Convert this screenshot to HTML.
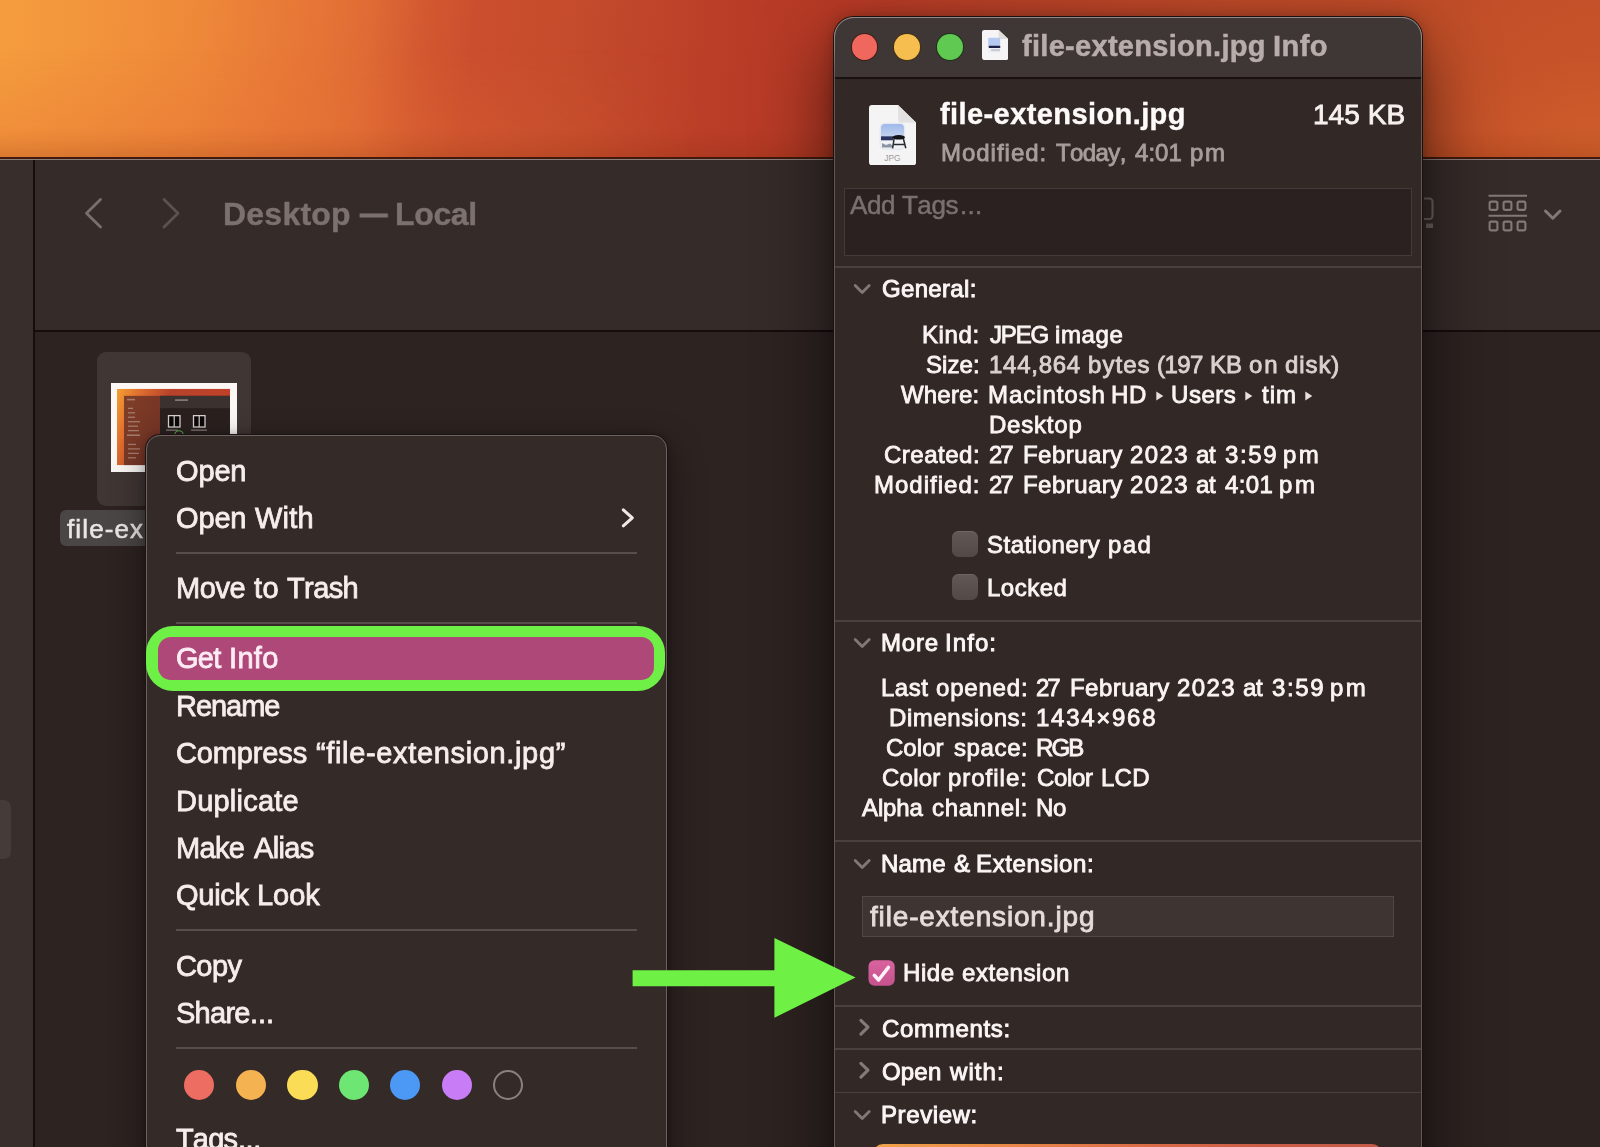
<!DOCTYPE html>
<html><head><meta charset="utf-8"><title>Get Info</title>
<style>
html,body{margin:0;padding:0;width:1600px;height:1147px;overflow:hidden;}
#root{position:absolute;left:0;top:0;width:1600px;height:1147px;overflow:hidden;background:#2d2321;}
body{width:1600px;height:1147px;overflow:hidden;position:relative;background:#2d2321;font-family:"Liberation Sans",sans-serif;font-kerning:none;}
.a{position:absolute;}
.t{position:absolute;white-space:pre;font-family:"Liberation Sans",sans-serif;font-kerning:none;font-variant-ligatures:none;will-change:transform;}
</style></head><body><div id="root">

<div class="a" style="left:0;top:0;width:1600px;height:160px;background:linear-gradient(96deg,#f59e3e 0%,#f2943c 6%,#ee8839 12.5%,#ea7e38 16%,#e57436 20%,#e06b35 23%,#d25830 26.5%,#cb4f2e 29.5%,#c44b2c 36%,#b93c27 46%,#b53925 52%,#b64027 62%,#bc4828 75%,#bf4c28 90%,#c14e28 100%);"></div>
<div class="a" style="left:1400px;top:0;width:200px;height:160px;background:radial-gradient(ellipse at 100% 100%,rgba(212,100,44,.75) 0%,rgba(206,92,42,.35) 50%,rgba(200,80,40,0) 100%);"></div>
<div class="a" style="left:0;top:0;width:700px;height:160px;background:linear-gradient(180deg,rgba(232,120,56,0) 0%,rgba(232,120,56,0) 30%,rgba(230,112,52,.38) 100%);-webkit-mask-image:linear-gradient(90deg,#000 0%,#000 45%,transparent 100%);mask-image:linear-gradient(90deg,#000 0%,#000 45%,transparent 100%);"></div>
<div class="a" style="left:0;top:128px;width:1600px;height:30px;background:linear-gradient(180deg,rgba(110,35,0,0) 0%,rgba(110,35,0,.06) 45%,rgba(110,35,0,.17) 100%);"></div>
<div class="a" style="left:0;top:157.2px;width:1600px;height:1.7px;background:#42190c;"></div>
<div class="a" style="left:0;top:158.8px;width:1600px;height:1.7px;background:#8a7d7a;"></div>
<div class="a" style="left:0;top:160.4px;width:1600px;height:171px;background:#352b29;"></div>
<div class="a" style="left:0;top:330px;width:1600px;height:1.5px;background:#140d0c;"></div>
<div class="a" style="left:0;top:331.5px;width:1600px;height:816px;background:#2d2321;"></div>
<div class="a" style="left:0;top:160px;width:33px;height:987px;background:#382e2c;"></div>
<div class="a" style="left:33px;top:160px;width:2px;height:987px;background:#150e0d;"></div>
<div class="a" style="left:-8px;top:800px;width:18.5px;height:59px;border-radius:7px;background:#453b39;"></div>
<svg class="a" style="left:80px;top:190px" width="110" height="46" viewBox="0 0 110 46">
<polyline points="20.5,9.5 6.5,23.3 20.5,37" fill="none" stroke="#7b6f6d" stroke-width="2.8" stroke-linecap="round" stroke-linejoin="round"/>
<polyline points="84,9.5 98,23.3 84,37" fill="none" stroke="#5d5250" stroke-width="2.8" stroke-linecap="round" stroke-linejoin="round"/>
</svg>
<div class="t" style="left:223.21px;top:198px;font-size:32.00px;line-height:32.00px;color:#7d716f;letter-spacing:0.234px;font-weight:bold;-webkit-text-stroke:0.40px #7d716f;">Desktop</div>
<div class="t" style="left:359.85px;top:197px;font-size:32.00px;line-height:32.00px;color:#7d716f;letter-spacing:0.000px;font-weight:bold;-webkit-text-stroke:0.90px #7d716f;transform:scaleX(0.86);transform-origin:0 0;">—</div>
<div class="t" style="left:395.06px;top:198px;font-size:32.00px;line-height:32.00px;color:#7d716f;letter-spacing:-0.343px;font-weight:bold;-webkit-text-stroke:0.40px #7d716f;">Local</div>
<svg class="a" style="left:1420px;top:190px" width="150" height="46" viewBox="0 0 150 46" fill="none" stroke="#847977" stroke-width="2.1">
<path d="M4,8.500 h5.500 a3,3 0 0 1 3,3 v14.500 a3,3 0 0 1 -3,3 h-5.500" stroke="#6e6361" stroke-width="2.1"/>
<rect x="6" y="33.500" width="7" height="4.500" fill="#6e6361" stroke="none"/>
<line x1="68.5" y1="5.8" x2="107" y2="5.8"/>
<line x1="68.5" y1="25.8" x2="107" y2="25.8"/>
<rect x="69.6" y="11.6" width="7.800" height="8.300" rx="1.600"/>
<rect x="83.6" y="11.6" width="7.800" height="8.300" rx="1.600"/>
<rect x="97.6" y="11.6" width="7.800" height="8.300" rx="1.600"/>
<rect x="69.6" y="31.6" width="7.800" height="8.800" rx="1.600"/>
<rect x="83.6" y="31.6" width="7.800" height="8.800" rx="1.600"/>
<rect x="97.6" y="31.6" width="7.800" height="8.800" rx="1.600"/>
<polyline points="125.5,21 132.8,28.200 140,21" stroke-width="3" stroke-linecap="round" stroke-linejoin="round"/>
</svg>
<div class="a" style="left:96.5px;top:352px;width:154.5px;height:154px;border-radius:9px;background:#403634;"></div>
<svg class="a" style="left:111px;top:383.4px" width="126" height="89" viewBox="0 0 126 90" preserveAspectRatio="none">
<defs><linearGradient id="wp" x1="0" y1="0" x2="1" y2="0.25"><stop offset="0" stop-color="#f3a033"/><stop offset="0.18" stop-color="#e2722f"/><stop offset="0.45" stop-color="#b8432a"/><stop offset="1" stop-color="#c2402a"/></linearGradient></defs>
<rect width="126" height="90" fill="#fbf8f6"/>
<rect x="6" y="6" width="113" height="77" fill="url(#wp)"/>
<rect x="13" y="13" width="36" height="70" fill="#6a3326" opacity=".85"/>
<rect x="49" y="13" width="70" height="70" fill="#2a211f"/>
<rect x="49" y="13" width="70" height="12.5" fill="#3b312f"/>
<g fill="#b08c80" opacity=".8"><rect x="16" y="16" width="8" height="1.6"/><rect x="17" y="25" width="5" height="1.3"/><rect x="17" y="29.5" width="7" height="1.3"/><rect x="17" y="34" width="7" height="1.3"/><rect x="17" y="38.5" width="12" height="1.3"/><rect x="17" y="43" width="10" height="1.3"/><rect x="17" y="47.5" width="11" height="1.3"/><rect x="16" y="52" width="13" height="1.6"/><rect x="17" y="61.5" width="8" height="1.3"/><rect x="17" y="66" width="12" height="1.3"/><rect x="17" y="70.5" width="11" height="1.3"/><rect x="17" y="75" width="8" height="1.3"/></g>
<rect x="64" y="16.500" width="13" height="1.600" fill="#8d807c"/>
<rect x="57.5" y="33" width="11.5" height="11.5" fill="#0b0807" stroke="#d8d2cf" stroke-width="1.3"/><line x1="63.2" y1="33" x2="63.2" y2="44.5" stroke="#d8d2cf" stroke-width="1.2"/>
<rect x="82.5" y="33" width="11.5" height="11.5" fill="#0b0807" stroke="#d8d2cf" stroke-width="1.3"/><line x1="88.2" y1="33" x2="88.2" y2="44.5" stroke="#d8d2cf" stroke-width="1.2"/>
<rect x="55" y="47" width="12" height="1.4" fill="#7d716e"/><rect x="80" y="47" width="16" height="1.4" fill="#7d716e"/><circle cx="68" cy="52.500" r="4.200" fill="none" stroke="#5fae4a" stroke-width="1.100"/>
</svg>
<div class="a" style="left:60px;top:510.2px;width:110px;height:36px;border-radius:6px;background:#4a4645;"></div>
<div class="t" style="left:67.31px;top:516px;font-size:26.00px;line-height:26.00px;color:#ebe5e3;letter-spacing:1.124px;-webkit-text-stroke:0.55px #ebe5e3;">file-ex</div>
<div class="a" style="left:146px;top:434.5px;width:521px;height:760px;border-radius:14px;background:#342a28;box-shadow:0 0 0 1px #1c1413,0 12px 36px rgba(0,0,0,.45),0 0 10px rgba(0,0,0,.28);"></div>
<div class="a" style="left:146px;top:434.5px;width:519px;height:760px;border-radius:14px;border:1.3px solid #6c6260;"></div>
<div class="t" style="left:175.70px;top:457px;font-size:29.00px;line-height:29.00px;color:#f6eeec;letter-spacing:-0.153px;-webkit-text-stroke:0.80px #f6eeec;">Open</div>
<div class="t" style="left:175.70px;top:504px;font-size:29.00px;line-height:29.00px;color:#f6eeec;letter-spacing:-0.153px;-webkit-text-stroke:0.80px #f6eeec;">Open</div>
<div class="t" style="left:255.27px;top:504px;font-size:29.00px;line-height:29.00px;color:#f6eeec;letter-spacing:0.237px;-webkit-text-stroke:0.80px #f6eeec;">With</div>
<svg class="a" style="left:616px;top:503px" width="24" height="30" viewBox="0 0 24 30"><polyline points="7.3,6.8 16.3,14.8 7.3,22.8" fill="none" stroke="#f1e9e7" stroke-width="3.1" stroke-linecap="round" stroke-linejoin="round"/></svg>
<div class="a" style="left:176px;top:551.5px;width:461px;height:2px;background:#584e4c;"></div>
<div class="a" style="left:176px;top:622.0px;width:461px;height:2px;background:#584e4c;"></div>
<div class="a" style="left:176px;top:928.5px;width:461px;height:2px;background:#584e4c;"></div>
<div class="a" style="left:176px;top:1046.5px;width:461px;height:2px;background:#584e4c;"></div>
<div class="t" style="left:175.70px;top:574px;font-size:29.00px;line-height:29.00px;color:#f6eeec;letter-spacing:-0.408px;-webkit-text-stroke:0.80px #f6eeec;">Move</div>
<div class="t" style="left:253.71px;top:574px;font-size:29.00px;line-height:29.00px;color:#f6eeec;letter-spacing:0.421px;-webkit-text-stroke:0.80px #f6eeec;">to</div>
<div class="t" style="left:287.25px;top:574px;font-size:29.00px;line-height:29.00px;color:#f6eeec;letter-spacing:-0.598px;-webkit-text-stroke:0.80px #f6eeec;">Trash</div>
<div class="a" style="left:145.5px;top:626.2px;width:519.2px;height:65px;border-radius:27px;background:#6ef046;"></div>
<div class="a" style="left:158px;top:637px;width:495.7px;height:43.4px;border-radius:13px;background:#ae4879;"></div>
<div class="t" style="left:175.70px;top:644px;font-size:29.00px;line-height:29.00px;color:#fcecf3;letter-spacing:-0.690px;-webkit-text-stroke:0.80px #fcecf3;">Get</div>
<div class="t" style="left:228.97px;top:644px;font-size:29.00px;line-height:29.00px;color:#fcecf3;letter-spacing:0.324px;-webkit-text-stroke:0.80px #fcecf3;">Info</div>
<div class="t" style="left:175.70px;top:692px;font-size:29.00px;line-height:29.00px;color:#f6eeec;letter-spacing:-1.035px;-webkit-text-stroke:0.80px #f6eeec;">Rename</div>
<div class="t" style="left:175.70px;top:739px;font-size:29.00px;line-height:29.00px;color:#f6eeec;letter-spacing:-0.135px;-webkit-text-stroke:0.80px #f6eeec;">Compress</div>
<div class="t" style="left:316.34px;top:739px;font-size:29.00px;line-height:29.00px;color:#f6eeec;letter-spacing:0.652px;-webkit-text-stroke:0.80px #f6eeec;">“file-extension.jpg”</div>
<div class="t" style="left:175.70px;top:787px;font-size:29.00px;line-height:29.00px;color:#f6eeec;letter-spacing:0.224px;-webkit-text-stroke:0.80px #f6eeec;">Duplicate</div>
<div class="t" style="left:175.70px;top:834px;font-size:29.00px;line-height:29.00px;color:#f6eeec;letter-spacing:-0.658px;-webkit-text-stroke:0.80px #f6eeec;">Make</div>
<div class="t" style="left:254.09px;top:834px;font-size:29.00px;line-height:29.00px;color:#f6eeec;letter-spacing:-0.638px;-webkit-text-stroke:0.80px #f6eeec;">Alias</div>
<div class="t" style="left:175.70px;top:881px;font-size:29.00px;line-height:29.00px;color:#f6eeec;letter-spacing:-0.255px;-webkit-text-stroke:0.80px #f6eeec;">Quick</div>
<div class="t" style="left:256.77px;top:881px;font-size:29.00px;line-height:29.00px;color:#f6eeec;letter-spacing:-0.033px;-webkit-text-stroke:0.80px #f6eeec;">Look</div>
<div class="t" style="left:175.70px;top:952px;font-size:29.00px;line-height:29.00px;color:#f6eeec;letter-spacing:-0.581px;-webkit-text-stroke:0.80px #f6eeec;">Copy</div>
<div class="t" style="left:175.70px;top:999px;font-size:29.00px;line-height:29.00px;color:#f6eeec;letter-spacing:-0.737px;-webkit-text-stroke:0.80px #f6eeec;">Share</div>
<div class="t" style="left:249.50px;top:999px;font-size:29.00px;line-height:29.00px;color:#f6eeec;letter-spacing:-0.088px;-webkit-text-stroke:0.80px #f6eeec;">...</div>
<div class="t" style="left:175.70px;top:1125px;font-size:29.00px;line-height:29.00px;color:#f6eeec;letter-spacing:-0.841px;-webkit-text-stroke:0.80px #f6eeec;">Tags</div>
<div class="t" style="left:237.75px;top:1125px;font-size:29.00px;line-height:29.00px;color:#f6eeec;letter-spacing:-0.463px;-webkit-text-stroke:0.80px #f6eeec;">...</div>
<div class="a" style="left:184.05px;top:1069.8px;width:30.4px;height:30.4px;border-radius:50%;background:radial-gradient(circle at 50% 40%,#ee6d62 0%,#ee6d62 70%,#e8584e 100%);"></div>
<div class="a" style="left:235.80px;top:1069.8px;width:30.4px;height:30.4px;border-radius:50%;background:radial-gradient(circle at 50% 40%,#f4b250 0%,#f4b250 70%,#eea23c 100%);"></div>
<div class="a" style="left:287.30px;top:1069.8px;width:30.4px;height:30.4px;border-radius:50%;background:radial-gradient(circle at 50% 40%,#fadc57 0%,#fadc57 70%,#f2cd3c 100%);"></div>
<div class="a" style="left:338.55px;top:1069.8px;width:30.4px;height:30.4px;border-radius:50%;background:radial-gradient(circle at 50% 40%,#6ee673 0%,#6ee673 70%,#55d35c 100%);"></div>
<div class="a" style="left:390.05px;top:1069.8px;width:30.4px;height:30.4px;border-radius:50%;background:radial-gradient(circle at 50% 40%,#4c98f5 0%,#4c98f5 70%,#3a84e6 100%);"></div>
<div class="a" style="left:441.80px;top:1069.8px;width:30.4px;height:30.4px;border-radius:50%;background:radial-gradient(circle at 50% 40%,#c87df6 0%,#c87df6 70%,#b564e6 100%);"></div>
<div class="a" style="left:493.05px;top:1069.8px;width:30.4px;height:30.4px;border-radius:50%;border:2px solid #8b817f;box-sizing:border-box;"></div>
<div class="a" style="left:834px;top:17px;width:588px;height:1200px;border-radius:20px;background:#322927;box-shadow:0 0 0 1px #1a1211,0 32px 70px 4px rgba(0,0,0,.55),0 0 14px rgba(0,0,0,.25);"></div>
<div class="a" style="left:834px;top:17px;width:588px;height:60.5px;border-radius:20px 20px 0 0;background:#3f3735;"></div>
<div class="a" style="left:834px;top:77px;width:588px;height:1.6px;background:#181110;"></div>
<div class="a" style="left:834px;top:17px;width:588px;height:1200px;border-radius:20px;border:1.4px solid #625856;box-sizing:border-box;"></div>
<div class="a" style="left:834px;top:17px;width:588px;height:60px;overflow:hidden;-webkit-mask-image:linear-gradient(180deg,#000 0%,#000 35%,transparent 100%);mask-image:linear-gradient(180deg,#000 0%,#000 35%,transparent 100%);"><div style="width:588px;height:200px;border-radius:20px;border:1.5px solid #918683;box-sizing:border-box;"></div></div>
<div class="a" style="left:851.60px;top:34.30px;width:25.6px;height:25.6px;border-radius:50%;background:#f0675d;box-shadow:0 0 0 1.1px rgba(70,15,10,.6);"></div>
<div class="a" style="left:894.30px;top:34.30px;width:25.6px;height:25.6px;border-radius:50%;background:#f6be4f;box-shadow:0 0 0 1.1px rgba(70,45,5,.6);"></div>
<div class="a" style="left:937.20px;top:34.30px;width:25.6px;height:25.6px;border-radius:50%;background:#5fc951;box-shadow:0 0 0 1.1px rgba(10,50,10,.6);"></div>
<svg class="a" style="left:981.8px;top:29.8px" width="26.3" height="30.1" viewBox="0 0 26.3 30.1">
<path d="M2.5,0 H16.700 L26.3,9 V27.600 a2.5,2.5 0 0 1 -2.5,2.5 H2.5 a2.5,2.5 0 0 1 -2.5,-2.5 V2.5 a2.5,2.5 0 0 1 2.5,-2.5 z" fill="#f6f4f4"/>
<path d="M16.700,0 L26.3,9 H18.700 a2,2 0 0 1 -2,-2 z" fill="#e0dddd"/>
<rect x="6.2" y="7.800" width="12" height="8.200" rx="1" fill="#b7caf1"/>
<rect x="6.2" y="16" width="12.400" height="6.500" fill="#eef0f5"/>
<rect x="6.600" y="15.800" width="11.800" height="2.100" rx="0.900" fill="#1c2244"/>
<rect x="9" y="19" width="9" height="2.200" fill="#c9ccd6"/>
</svg>
<div class="t" style="left:1021.95px;top:32px;font-size:29.00px;line-height:29.00px;color:#b8adab;letter-spacing:0.298px;font-weight:bold;-webkit-text-stroke:0.50px #b8adab;">file-extension.jpg</div>
<div class="t" style="left:1272.61px;top:32px;font-size:29.00px;line-height:29.00px;color:#b8adab;letter-spacing:0.443px;font-weight:bold;-webkit-text-stroke:0.50px #b8adab;">Info</div>
<svg class="a" style="left:868.7px;top:104.8px" width="47.1" height="60.3" viewBox="0 0 47.1 60.3">
<defs><linearGradient id="sky" x1="0" y1="0" x2="0" y2="1"><stop offset="0" stop-color="#9db8ea"/><stop offset="1" stop-color="#c6d4ef"/></linearGradient></defs>
<path d="M3,0 H29 L47.1,17.700 V57.300 a3,3 0 0 1 -3,3 H3 a3,3 0 0 1 -3,-3 V3 a3,3 0 0 1 3,-3 z" fill="#f5f4f4"/>
<path d="M29,0 L47.1,17.700 H32.500 a3.500,3.500 0 0 1 -3.500,-3.500 z" fill="#e3e1e1"/>
<rect x="10.600" y="17.600" width="25.600" height="27.400" rx="5.200" fill="#e6e9f0"/>
<path d="M12,23 a4,4 0 0 1 4,-4 h15 a4,4 0 0 1 4,4 v8.800 h-23 z" fill="url(#sky)"/>
<path d="M12,31.600 h23 v8 a4,4 0 0 1 -4,4 h-15 a4,4 0 0 1 -4,-4 z" fill="#f1f3f7"/>
<rect x="12" y="31.300" width="12" height="4" fill="#2b3562"/>
<path d="M13,38 l4,2 l4,-1.500 l3,2.500 v1.500 h-11 z" fill="#8d94a6"/>
<path d="M25.200,33 L23.600,43.300 M34.200,33 L36.800,43.300 M24.200,39.500 H36" stroke="#2a2a31" stroke-width="1.500" fill="none"/>
<ellipse cx="29.700" cy="32.300" rx="6.300" ry="2.300" fill="#131318"/>
<text x="23.400" y="56" font-family="Liberation Sans, sans-serif" font-size="8.400" fill="#9c9a9a" text-anchor="middle">JPG</text>
</svg>
<div class="t" style="left:940.30px;top:100px;font-size:29.00px;line-height:29.00px;color:#fdfaf9;letter-spacing:0.410px;font-weight:bold;-webkit-text-stroke:0.40px #fdfaf9;">file-extension.jpg</div>
<div class="t" style="left:1312.69px;top:101px;font-size:28.00px;line-height:28.00px;color:#f6f1ef;letter-spacing:0.052px;-webkit-text-stroke:0.85px #f6f1ef;">145 KB</div>
<div class="t" style="left:940.96px;top:141px;font-size:24.00px;line-height:24.00px;color:#a89d9b;letter-spacing:0.978px;-webkit-text-stroke:0.85px #a89d9b;">Modified:</div>
<div class="t" style="left:1056.39px;top:141px;font-size:24.00px;line-height:24.00px;color:#a89d9b;letter-spacing:-0.605px;-webkit-text-stroke:0.85px #a89d9b;">Today,</div>
<div class="t" style="left:1134.67px;top:141px;font-size:24.00px;line-height:24.00px;color:#a89d9b;letter-spacing:0.054px;-webkit-text-stroke:0.85px #a89d9b;">4:01</div>
<div class="t" style="left:1190.18px;top:141px;font-size:24.00px;line-height:24.00px;color:#a89d9b;letter-spacing:1.639px;-webkit-text-stroke:0.85px #a89d9b;">pm</div>
<div class="a" style="left:844px;top:187.7px;width:567.5px;height:68px;background:#2b2120;border:1.3px solid #443a38;box-sizing:border-box;"></div>
<div class="t" style="left:850.20px;top:192px;font-size:26.00px;line-height:26.00px;color:#7a706e;letter-spacing:-0.400px;-webkit-text-stroke:0.50px #7a706e;">Add Tags</div>
<div class="t" style="left:959.88px;top:192px;font-size:26.00px;line-height:26.00px;color:#7a706e;letter-spacing:0.289px;-webkit-text-stroke:0.50px #7a706e;">...</div>
<div class="a" style="left:835.4px;top:266.10px;width:585.2px;height:1.6px;background:#4a403e;"></div>
<svg class="a" style="left:850px;top:281.40px" width="24" height="16" viewBox="0 0 24 16"><polyline points="5.2,4.600 12.200,11.600 19.200,4.600" fill="none" stroke="#837876" stroke-width="2.800" stroke-linecap="round" stroke-linejoin="round"/></svg>
<div class="t" style="left:881.77px;top:277px;font-size:24.00px;line-height:24.00px;color:#fbf6f5;letter-spacing:0.328px;-webkit-text-stroke:0.95px #fbf6f5;">General:</div>
<div class="t" style="left:922.46px;top:323px;font-size:24.00px;line-height:24.00px;color:#faf4f3;letter-spacing:0.602px;-webkit-text-stroke:0.85px #faf4f3;">Kind:</div>
<div class="t" style="left:989.75px;top:323px;font-size:24.00px;line-height:24.00px;color:#faf4f3;letter-spacing:-1.189px;-webkit-text-stroke:0.85px #faf4f3;">JPEG</div>
<div class="t" style="left:1054.82px;top:323px;font-size:24.00px;line-height:24.00px;color:#faf4f3;letter-spacing:0.614px;-webkit-text-stroke:0.85px #faf4f3;">image</div>
<div class="t" style="left:925.84px;top:353px;font-size:24.00px;line-height:24.00px;color:#faf4f3;letter-spacing:0.094px;-webkit-text-stroke:0.85px #faf4f3;">Size:</div>
<div class="t" style="left:988.60px;top:353px;font-size:24.00px;line-height:24.00px;color:#dbd1cf;letter-spacing:0.738px;-webkit-text-stroke:0.85px #dbd1cf;">144,864</div>
<div class="t" style="left:1087.63px;top:353px;font-size:24.00px;line-height:24.00px;color:#dbd1cf;letter-spacing:1.050px;-webkit-text-stroke:0.85px #dbd1cf;">bytes</div>
<div class="t" style="left:1156.94px;top:353px;font-size:24.00px;line-height:24.00px;color:#dbd1cf;letter-spacing:-0.563px;-webkit-text-stroke:0.85px #dbd1cf;">(197</div>
<div class="t" style="left:1210.46px;top:353px;font-size:24.00px;line-height:24.00px;color:#dbd1cf;letter-spacing:-0.131px;-webkit-text-stroke:0.85px #dbd1cf;">KB</div>
<div class="t" style="left:1249.42px;top:353px;font-size:24.00px;line-height:24.00px;color:#dbd1cf;letter-spacing:2.021px;-webkit-text-stroke:0.85px #dbd1cf;">on</div>
<div class="t" style="left:1284.72px;top:353px;font-size:24.00px;line-height:24.00px;color:#dbd1cf;letter-spacing:0.919px;-webkit-text-stroke:0.85px #dbd1cf;">disk)</div>
<div class="t" style="left:901.32px;top:383px;font-size:24.00px;line-height:24.00px;color:#faf4f3;letter-spacing:0.178px;-webkit-text-stroke:0.85px #faf4f3;">Where:</div>
<div class="t" style="left:987.96px;top:383px;font-size:24.00px;line-height:24.00px;color:#faf4f3;letter-spacing:0.943px;-webkit-text-stroke:0.85px #faf4f3;">Macintosh</div>
<div class="t" style="left:1110.96px;top:383px;font-size:24.00px;line-height:24.00px;color:#faf4f3;letter-spacing:0.603px;-webkit-text-stroke:0.85px #faf4f3;">HD</div>
<div class="t" style="left:1170.57px;top:383px;font-size:24.00px;line-height:24.00px;color:#faf4f3;letter-spacing:0.549px;-webkit-text-stroke:0.85px #faf4f3;">Users</div>
<div class="t" style="left:1262.06px;top:383px;font-size:24.00px;line-height:24.00px;color:#faf4f3;letter-spacing:1.052px;-webkit-text-stroke:0.85px #faf4f3;">tim</div>
<div class="t" style="left:989.06px;top:413px;font-size:24.00px;line-height:24.00px;color:#faf4f3;letter-spacing:0.789px;-webkit-text-stroke:0.85px #faf4f3;">Desktop</div>
<div class="t" style="left:883.96px;top:443px;font-size:24.00px;line-height:24.00px;color:#faf4f3;letter-spacing:0.508px;-webkit-text-stroke:0.85px #faf4f3;">Created:</div>
<div class="t" style="left:989.22px;top:443px;font-size:24.00px;line-height:24.00px;color:#faf4f3;letter-spacing:-2.131px;-webkit-text-stroke:0.85px #faf4f3;">27</div>
<div class="t" style="left:1022.86px;top:443px;font-size:24.00px;line-height:24.00px;color:#faf4f3;letter-spacing:0.461px;-webkit-text-stroke:0.85px #faf4f3;">February</div>
<div class="t" style="left:1130.47px;top:443px;font-size:24.00px;line-height:24.00px;color:#faf4f3;letter-spacing:1.424px;-webkit-text-stroke:0.85px #faf4f3;">2023</div>
<div class="t" style="left:1195.66px;top:443px;font-size:24.00px;line-height:24.00px;color:#faf4f3;letter-spacing:-0.420px;-webkit-text-stroke:0.85px #faf4f3;">at</div>
<div class="t" style="left:1224.51px;top:443px;font-size:24.00px;line-height:24.00px;color:#faf4f3;letter-spacing:1.663px;-webkit-text-stroke:0.85px #faf4f3;">3:59</div>
<div class="t" style="left:1283.38px;top:443px;font-size:24.00px;line-height:24.00px;color:#faf4f3;letter-spacing:2.439px;-webkit-text-stroke:0.85px #faf4f3;">pm</div>
<div class="t" style="left:874.06px;top:473px;font-size:24.00px;line-height:24.00px;color:#faf4f3;letter-spacing:1.016px;-webkit-text-stroke:0.85px #faf4f3;">Modified:</div>
<div class="t" style="left:989.22px;top:473px;font-size:24.00px;line-height:24.00px;color:#faf4f3;letter-spacing:-2.131px;-webkit-text-stroke:0.85px #faf4f3;">27</div>
<div class="t" style="left:1022.86px;top:473px;font-size:24.00px;line-height:24.00px;color:#faf4f3;letter-spacing:0.461px;-webkit-text-stroke:0.85px #faf4f3;">February</div>
<div class="t" style="left:1130.47px;top:473px;font-size:24.00px;line-height:24.00px;color:#faf4f3;letter-spacing:1.424px;-webkit-text-stroke:0.85px #faf4f3;">2023</div>
<div class="t" style="left:1195.66px;top:473px;font-size:24.00px;line-height:24.00px;color:#faf4f3;letter-spacing:-0.420px;-webkit-text-stroke:0.85px #faf4f3;">at</div>
<div class="t" style="left:1224.87px;top:473px;font-size:24.00px;line-height:24.00px;color:#faf4f3;letter-spacing:0.387px;-webkit-text-stroke:0.85px #faf4f3;">4:01</div>
<div class="t" style="left:1279.38px;top:473px;font-size:24.00px;line-height:24.00px;color:#faf4f3;letter-spacing:2.689px;-webkit-text-stroke:0.85px #faf4f3;">pm</div>
<svg class="a" style="left:1155.50px;top:391px" width="8" height="10" viewBox="0 0 8 10"><path d="M0.3,0.6 L7.3,5 L0.3,9.400 z" fill="#e9e0de"/></svg>
<svg class="a" style="left:1245.20px;top:391px" width="8" height="10" viewBox="0 0 8 10"><path d="M0.3,0.6 L7.3,5 L0.3,9.400 z" fill="#e9e0de"/></svg>
<svg class="a" style="left:1305.20px;top:391px" width="8" height="10" viewBox="0 0 8 10"><path d="M0.3,0.6 L7.3,5 L0.3,9.400 z" fill="#e9e0de"/></svg>
<div class="a" style="left:952px;top:531.25px;width:26px;height:26px;border-radius:6.5px;background:linear-gradient(#625856,#524947);box-shadow:inset 0 0.8px 0 rgba(255,255,255,.12);"></div>
<div class="a" style="left:952px;top:574.25px;width:26px;height:26px;border-radius:6.5px;background:linear-gradient(#625856,#524947);box-shadow:inset 0 0.8px 0 rgba(255,255,255,.12);"></div>
<div class="t" style="left:986.84px;top:533px;font-size:24.00px;line-height:24.00px;color:#faf4f3;letter-spacing:0.525px;-webkit-text-stroke:0.85px #faf4f3;">Stationery</div>
<div class="t" style="left:1108.38px;top:533px;font-size:24.00px;line-height:24.00px;color:#faf4f3;letter-spacing:1.350px;-webkit-text-stroke:0.85px #faf4f3;">pad</div>
<div class="t" style="left:986.96px;top:576px;font-size:24.00px;line-height:24.00px;color:#faf4f3;letter-spacing:0.505px;-webkit-text-stroke:0.85px #faf4f3;">Locked</div>
<div class="a" style="left:835.4px;top:619.95px;width:585.2px;height:1.6px;background:#4a403e;"></div>
<svg class="a" style="left:850px;top:635.00px" width="24" height="16" viewBox="0 0 24 16"><polyline points="5.2,4.600 12.200,11.600 19.200,4.600" fill="none" stroke="#837876" stroke-width="2.800" stroke-linecap="round" stroke-linejoin="round"/></svg>
<div class="t" style="left:881.01px;top:631px;font-size:24.00px;line-height:24.00px;color:#fbf6f5;letter-spacing:0.802px;-webkit-text-stroke:0.95px #fbf6f5;">More</div>
<div class="t" style="left:944.51px;top:631px;font-size:24.00px;line-height:24.00px;color:#fbf6f5;letter-spacing:1.064px;-webkit-text-stroke:0.95px #fbf6f5;">Info:</div>
<div class="t" style="left:880.96px;top:676px;font-size:24.00px;line-height:24.00px;color:#faf4f3;letter-spacing:0.477px;-webkit-text-stroke:0.85px #faf4f3;">Last</div>
<div class="t" style="left:935.67px;top:676px;font-size:24.00px;line-height:24.00px;color:#faf4f3;letter-spacing:0.808px;-webkit-text-stroke:0.85px #faf4f3;">opened:</div>
<div class="t" style="left:1036.22px;top:676px;font-size:24.00px;line-height:24.00px;color:#faf4f3;letter-spacing:-2.131px;-webkit-text-stroke:0.85px #faf4f3;">27</div>
<div class="t" style="left:1069.86px;top:676px;font-size:24.00px;line-height:24.00px;color:#faf4f3;letter-spacing:0.461px;-webkit-text-stroke:0.85px #faf4f3;">February</div>
<div class="t" style="left:1177.47px;top:676px;font-size:24.00px;line-height:24.00px;color:#faf4f3;letter-spacing:1.424px;-webkit-text-stroke:0.85px #faf4f3;">2023</div>
<div class="t" style="left:1242.66px;top:676px;font-size:24.00px;line-height:24.00px;color:#faf4f3;letter-spacing:-0.420px;-webkit-text-stroke:0.85px #faf4f3;">at</div>
<div class="t" style="left:1271.51px;top:676px;font-size:24.00px;line-height:24.00px;color:#faf4f3;letter-spacing:1.663px;-webkit-text-stroke:0.85px #faf4f3;">3:59</div>
<div class="t" style="left:1330.38px;top:676px;font-size:24.00px;line-height:24.00px;color:#faf4f3;letter-spacing:2.439px;-webkit-text-stroke:0.85px #faf4f3;">pm</div>
<div class="t" style="left:889.46px;top:706px;font-size:24.00px;line-height:24.00px;color:#faf4f3;letter-spacing:0.576px;-webkit-text-stroke:0.85px #faf4f3;">Dimensions:</div>
<div class="t" style="left:1036.10px;top:706px;font-size:24.00px;line-height:24.00px;color:#faf4f3;letter-spacing:1.725px;-webkit-text-stroke:0.85px #faf4f3;">1434×968</div>
<div class="t" style="left:886.21px;top:736px;font-size:24.00px;line-height:24.00px;color:#faf4f3;letter-spacing:0.041px;-webkit-text-stroke:0.85px #faf4f3;">Color</div>
<div class="t" style="left:953.51px;top:736px;font-size:24.00px;line-height:24.00px;color:#faf4f3;letter-spacing:0.610px;-webkit-text-stroke:0.85px #faf4f3;">space:</div>
<div class="t" style="left:1036.46px;top:736px;font-size:24.00px;line-height:24.00px;color:#faf4f3;letter-spacing:-1.937px;-webkit-text-stroke:0.85px #faf4f3;">RGB</div>
<div class="t" style="left:881.71px;top:766px;font-size:24.00px;line-height:24.00px;color:#faf4f3;letter-spacing:0.229px;-webkit-text-stroke:0.85px #faf4f3;">Color</div>
<div class="t" style="left:948.38px;top:766px;font-size:24.00px;line-height:24.00px;color:#faf4f3;letter-spacing:0.979px;-webkit-text-stroke:0.85px #faf4f3;">profile:</div>
<div class="t" style="left:1036.51px;top:766px;font-size:24.00px;line-height:24.00px;color:#faf4f3;letter-spacing:-0.346px;-webkit-text-stroke:0.85px #faf4f3;">Color</div>
<div class="t" style="left:1100.96px;top:766px;font-size:24.00px;line-height:24.00px;color:#faf4f3;letter-spacing:0.253px;-webkit-text-stroke:0.85px #faf4f3;">LCD</div>
<div class="t" style="left:862.38px;top:796px;font-size:24.00px;line-height:24.00px;color:#faf4f3;letter-spacing:-0.109px;-webkit-text-stroke:0.85px #faf4f3;">Alpha</div>
<div class="t" style="left:931.91px;top:796px;font-size:24.00px;line-height:24.00px;color:#faf4f3;letter-spacing:0.660px;-webkit-text-stroke:0.85px #faf4f3;">channel:</div>
<div class="t" style="left:1036.46px;top:796px;font-size:24.00px;line-height:24.00px;color:#faf4f3;letter-spacing:-0.303px;-webkit-text-stroke:0.85px #faf4f3;">No</div>
<div class="a" style="left:835.4px;top:839.95px;width:585.2px;height:1.6px;background:#4a403e;"></div>
<svg class="a" style="left:850px;top:855.75px" width="24" height="16" viewBox="0 0 24 16"><polyline points="5.2,4.600 12.200,11.600 19.200,4.600" fill="none" stroke="#837876" stroke-width="2.800" stroke-linecap="round" stroke-linejoin="round"/></svg>
<div class="t" style="left:881.01px;top:852px;font-size:24.00px;line-height:24.00px;color:#fbf6f5;letter-spacing:0.189px;-webkit-text-stroke:0.95px #fbf6f5;">Name</div>
<div class="t" style="left:953.88px;top:852px;font-size:24.00px;line-height:24.00px;color:#fbf6f5;letter-spacing:0.000px;-webkit-text-stroke:0.95px #fbf6f5;">&amp;</div>
<div class="t" style="left:976.01px;top:852px;font-size:24.00px;line-height:24.00px;color:#fbf6f5;letter-spacing:0.627px;-webkit-text-stroke:0.95px #fbf6f5;">Extension:</div>
<div class="a" style="left:862px;top:896px;width:532px;height:41px;background:#3e3432;border:1.3px solid #514745;box-sizing:border-box;"></div>
<div class="t" style="left:869.73px;top:903px;font-size:28.00px;line-height:28.00px;color:#e6dcda;letter-spacing:0.843px;-webkit-text-stroke:0.85px #e6dcda;">file-extension.jpg</div>
<svg class="a" style="left:868px;top:960px" width="27" height="27" viewBox="0 0 27 27">
<defs><linearGradient id="pk" x1="0" y1="0" x2="0" y2="1"><stop offset="0" stop-color="#d9639f"/><stop offset="1" stop-color="#c5528d"/></linearGradient></defs>
<rect x="0.5" y="0.3" width="26.200" height="25.500" rx="6" fill="url(#pk)"/>
<polyline points="6.300,15.300 10.600,20 20.400,7.400" fill="none" stroke="#fff2f9" stroke-width="3.500" stroke-linecap="round" stroke-linejoin="round"/>
</svg>
<div class="t" style="left:903.26px;top:961px;font-size:24.00px;line-height:24.00px;color:#faf4f3;letter-spacing:0.592px;-webkit-text-stroke:0.85px #faf4f3;">Hide</div>
<div class="t" style="left:961.71px;top:961px;font-size:24.00px;line-height:24.00px;color:#faf4f3;letter-spacing:0.561px;-webkit-text-stroke:0.85px #faf4f3;">extension</div>
<div class="a" style="left:835.4px;top:1005.10px;width:585.2px;height:1.6px;background:#4a403e;"></div>
<svg class="a" style="left:855px;top:1015.25px" width="20" height="24" viewBox="0 0 20 24"><polyline points="5.900,5.300 13,12.200 5.900,19.100" fill="none" stroke="#857a78" stroke-width="3.100" stroke-linecap="round" stroke-linejoin="round"/></svg>
<div class="t" style="left:881.76px;top:1017px;font-size:24.00px;line-height:24.00px;color:#fbf6f5;letter-spacing:0.689px;-webkit-text-stroke:0.95px #fbf6f5;">Comments:</div>
<div class="a" style="left:835.4px;top:1048.45px;width:585.2px;height:1.6px;background:#4a403e;"></div>
<svg class="a" style="left:855px;top:1058.00px" width="20" height="24" viewBox="0 0 20 24"><polyline points="5.900,5.300 13,12.200 5.900,19.100" fill="none" stroke="#857a78" stroke-width="3.100" stroke-linecap="round" stroke-linejoin="round"/></svg>
<div class="t" style="left:881.84px;top:1060px;font-size:24.00px;line-height:24.00px;color:#fbf6f5;letter-spacing:0.178px;-webkit-text-stroke:0.95px #fbf6f5;">Open</div>
<div class="t" style="left:950.01px;top:1060px;font-size:24.00px;line-height:24.00px;color:#fbf6f5;letter-spacing:1.090px;-webkit-text-stroke:0.95px #fbf6f5;">with:</div>
<div class="a" style="left:835.4px;top:1091.50px;width:585.2px;height:1.6px;background:#4a403e;"></div>
<svg class="a" style="left:850px;top:1106.50px" width="24" height="16" viewBox="0 0 24 16"><polyline points="5.2,4.600 12.200,11.600 19.200,4.600" fill="none" stroke="#837876" stroke-width="2.800" stroke-linecap="round" stroke-linejoin="round"/></svg>
<div class="t" style="left:881.01px;top:1103px;font-size:24.00px;line-height:24.00px;color:#fbf6f5;letter-spacing:0.598px;-webkit-text-stroke:0.95px #fbf6f5;">Preview:</div>
<div class="a" style="left:872.5px;top:1143.7px;width:509px;height:40px;border-radius:10px 10px 0 0;background:linear-gradient(90deg,#f0a24a 0%,#e98a48 25%,#dc6f47 50%,#cb5d47 75%,#c25a48 100%);"></div>
<svg class="a" style="left:620px;top:930px" width="250" height="96" viewBox="0 0 250 96"><path d="M12.600,40.300 H154.400 V8 L235.600,47.600 L154.400,87.800 V56.300 H12.600 z" fill="#6ef045"/></svg>
</div></body></html>
